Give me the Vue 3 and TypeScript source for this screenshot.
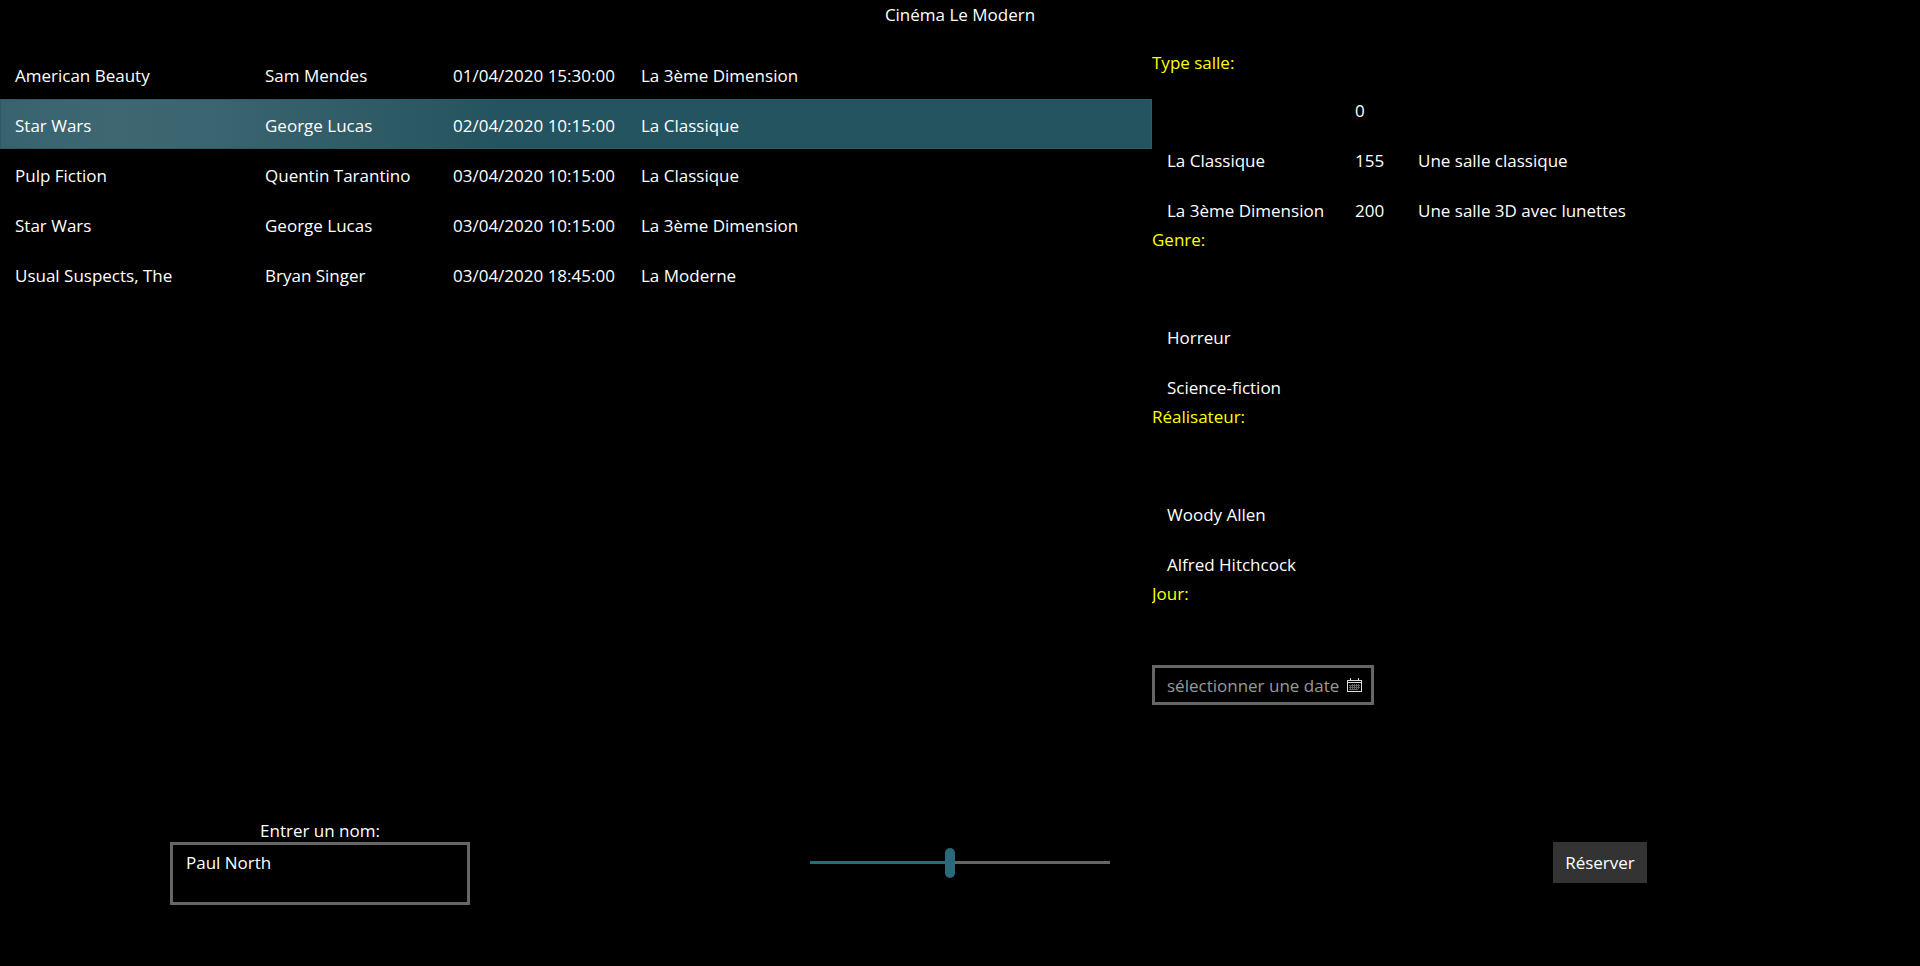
<script setup lang="ts">
import { ref } from 'vue'

interface Seance {
  film: string
  realisateur: string
  date: string
  salle: string
}

interface Salle {
  nom: string
  places: number
  description: string
}

const seances: Seance[] = [
  { film: 'American Beauty', realisateur: 'Sam Mendes', date: '01/04/2020 15:30:00', salle: 'La 3ème Dimension' },
  { film: 'Star Wars', realisateur: 'George Lucas', date: '02/04/2020 10:15:00', salle: 'La Classique' },
  { film: 'Pulp Fiction', realisateur: 'Quentin Tarantino', date: '03/04/2020 10:15:00', salle: 'La Classique' },
  { film: 'Star Wars', realisateur: 'George Lucas', date: '03/04/2020 10:15:00', salle: 'La 3ème Dimension' },
  { film: 'Usual Suspects, The', realisateur: 'Bryan Singer', date: '03/04/2020 18:45:00', salle: 'La Moderne' },
]

const salles: Salle[] = [
  { nom: '', places: 0, description: '' },
  { nom: 'La Classique', places: 155, description: 'Une salle classique' },
  { nom: 'La 3ème Dimension', places: 200, description: 'Une salle 3D avec lunettes' },
]

const genres: string[] = ['', 'Horreur', 'Science-fiction']
const realisateurs: string[] = ['', 'Woody Allen', 'Alfred Hitchcock']

const selected = ref(1)
const nom = ref('Paul North')
const places = ref(14)
const jour = ref('')
</script>

<template>
  <div class="page">
    <h1 class="title">Cinéma Le Modern</h1>

    <main class="content">
      <table class="seances" aria-label="Séances">
        <colgroup>
          <col class="c-film" />
          <col class="c-mid" />
          <col class="c-mid" />
          <col />
        </colgroup>
        <tbody>
          <tr v-for="(s, i) in seances" :key="i" :class="{ selected: i === selected }" @click="selected = i">
            <td>{{ s.film }}</td>
            <td>{{ s.realisateur }}</td>
            <td>{{ s.date }}</td>
            <td>{{ s.salle }}</td>
          </tr>
        </tbody>
      </table>

      <div class="filters">
        <section class="filter">
          <h2>Type salle:</h2>
          <div class="list">
            <table class="salles" aria-label="Type salle">
              <colgroup>
                <col class="c-nom" />
                <col class="c-places" />
                <col />
              </colgroup>
              <tbody>
                <tr v-for="(s, i) in salles" :key="i">
                  <td>{{ s.nom }}</td>
                  <td>{{ s.places }}</td>
                  <td>{{ s.description }}</td>
                </tr>
              </tbody>
            </table>
          </div>
        </section>

        <section class="filter">
          <h2>Genre:</h2>
          <ul class="list">
            <li v-for="(g, i) in genres" :key="i">{{ g }}</li>
          </ul>
        </section>

        <section class="filter">
          <h2>Réalisateur:</h2>
          <ul class="list">
            <li v-for="(r, i) in realisateurs" :key="i">{{ r }}</li>
          </ul>
        </section>

        <section class="filter">
          <h2><label for="jour">Jour:</label></h2>
          <div class="date-row">
            <div class="date">
              <input id="jour" v-model="jour" type="text" placeholder="sélectionner une date" />
              <button type="button" class="cal" aria-label="Calendrier">
                <svg width="15" height="15" viewBox="0 0 15 15" fill="none" stroke="currentColor" shape-rendering="crispEdges">
                  <path d="M.5 2.500h14v11H.5zM.5 4.500h14M3.500 0v3M11.500 0v3" />
                  <path d="M5.500 6v6M7.500 6v6M9.500 6v6M11.500 6v5M3.500 7v5M2 7.500h11M2 9.500h11M2 11.500h9" opacity=".45" />
                </svg>
              </button>
            </div>
          </div>
        </section>
      </div>
    </main>

    <footer class="booking">
      <div class="name">
        <label for="nom">Entrer un nom:</label>
        <textarea id="nom" v-model="nom" spellcheck="false"></textarea>
      </div>
      <input
        v-model.number="places"
        class="slider"
        type="range"
        min="0"
        max="30"
        aria-label="Nombre de places"
        :style="{ '--fill': (places / 30) * 100 + '%' }"
      />
      <button type="button" class="reserve">Réserver</button>
    </footer>
  </div>
</template>

<style>
html,
body {
  background: #000;
}
</style>

<style scoped>
.page {
  box-sizing: border-box;
  min-height: 100vh;
  display: grid;
  grid-template-rows: 49px minmax(708px, auto) 1fr;
  background: #000;
  color: #fff;
  font: 17px/25px 'Segoe UI', 'Open Sans', 'Noto Sans', sans-serif;
}
.page * {
  box-sizing: border-box;
}
.title {
  margin: 0;
  padding-top: 2px;
  font: inherit;
  text-align: center;
}
.content {
  display: grid;
  grid-template-columns: 3fr 2fr;
  align-items: start;
}
table {
  width: 100%;
  table-layout: fixed;
  border-collapse: collapse;
}
td {
  height: 50px;
  padding: 2px 0 0 15px;
  white-space: nowrap;
}
.c-film {
  width: 250px;
}
.c-mid {
  width: 188px;
}
.c-nom {
  width: 188px;
}
.c-places {
  width: 63px;
}
.selected {
  background: linear-gradient(90deg, #38636e 0, #3e6772 115px, #3a646f 220px, #24545f 500px);
  box-shadow: inset 0 0 0 1px #2a5b66;
}
.filters {
  display: grid;
  grid-template-rows: repeat(4, 177px);
}
.filter {
  display: flex;
  flex-direction: column;
  overflow: hidden;
}
h2 {
  margin: 0 0 9px;
  padding-top: 1px;
  font: inherit;
  color: #ff0;
}
.list {
  flex: 1;
  min-height: 0;
  margin: 0;
  padding: 0;
  overflow: hidden;
  list-style: none;
}
li {
  height: 50px;
  padding: 14px 15px 0;
}
.date-row {
  flex: 1;
  display: flex;
  align-items: center;
  padding-bottom: 2px;
}
.date {
  display: flex;
  align-items: center;
  width: 222px;
  height: 40px;
  border: 3px solid #666;
}
.date input {
  flex: 1;
  min-width: 0;
  height: 34px;
  padding: 0 0 0 12px;
  border: 0;
  outline: 0;
  background: transparent;
  color: #fff;
  font: inherit;
}
.date input::placeholder {
  color: #999;
  opacity: 1;
}
.cal {
  display: flex;
  padding: 0 9px 0 0;
  border: 0;
  background: transparent;
  color: #ddd;
}
.booking {
  display: grid;
  grid-template-columns: repeat(3, 1fr);
  place-items: center;
  padding-top: 2px;
}
.name {
  display: flex;
  flex-direction: column;
  align-items: center;
}
.name label {
  line-height: 22px;
}
.name textarea {
  display: block;
  width: 300px;
  height: 63px;
  padding: 5px 13px;
  border: 3px solid #666;
  outline: 0;
  resize: none;
  background: #000;
  color: #fff;
  font: inherit;
}
.slider {
  width: 300px;
  height: 30px;
  margin: 0;
  appearance: none;
  background: linear-gradient(90deg, #2a6b7b var(--fill), #666 var(--fill)) center / 100% 3px no-repeat;
}
.slider::-webkit-slider-thumb {
  appearance: none;
  width: 10px;
  height: 30px;
  border-radius: 5px;
  background: #2a6b7b;
}
.reserve {
  height: 41px;
  padding: 0 12px;
  border: 0;
  background: #333;
  color: #fff;
  font: inherit;
}
</style>
